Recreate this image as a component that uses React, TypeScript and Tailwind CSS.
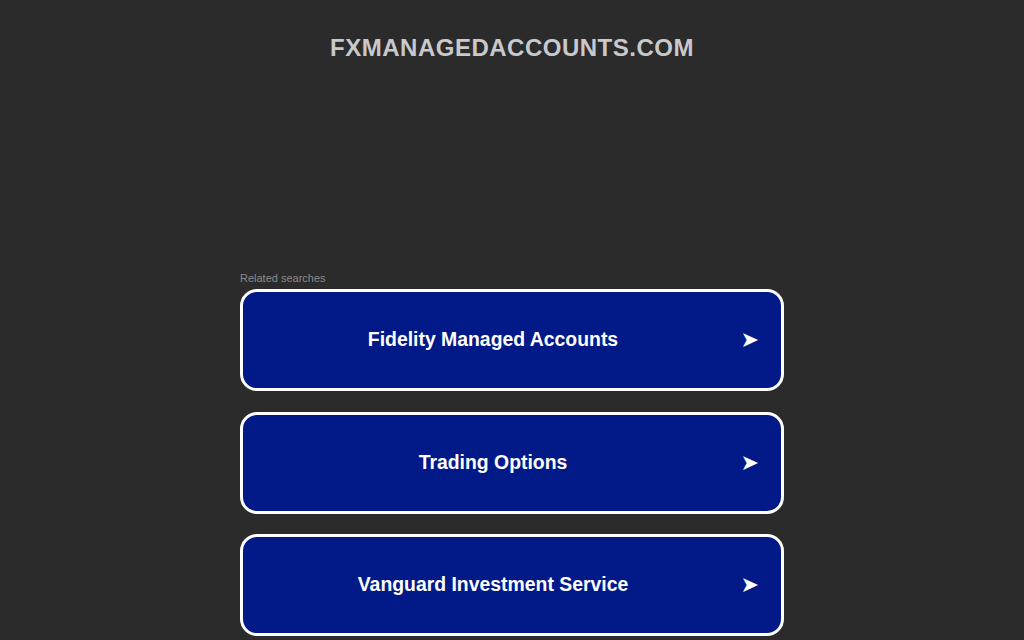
import React from "react";

const items = ["Fidelity Managed Accounts", "Trading Options", "Vanguard Investment Service"];

export default function App() {
  return (
    <div
      className="w-[1024px] h-[640px] overflow-hidden bg-[#2b2b2b] flex flex-col items-center"
      style={{ fontFamily: '"Liberation Sans", Arial, sans-serif' }}
    >
      <div className="pt-[34px] h-[272px] text-[24px] leading-[28px] font-bold text-[#c9c9cc] tracking-[0.5px]">
        FXMANAGEDACCOUNTS.COM
      </div>
      <div className="w-[544px] flex flex-col">
        <div className="text-[11px] leading-[13px] text-[#8a8a8a] mb-[4px]">Related searches</div>
        <div className="flex flex-col gap-[20.5px]">
          {items.map((t) => (
            <div
              key={t}
              className="relative h-[102px] rounded-[17px] border-[3px] border-white bg-[#011a88] flex items-center"
            >
              <span className="flex-1 pr-[38px] text-center text-[19.4px] font-bold text-white">{t}</span>
              <span className="absolute right-[22px] top-1/2 -translate-y-1/2 text-[22px] text-white leading-none" style={{ fontFamily: '"DejaVu Sans", sans-serif' }}>
                ➤
              </span>
            </div>
          ))}
        </div>
      </div>
    </div>
  );
}
